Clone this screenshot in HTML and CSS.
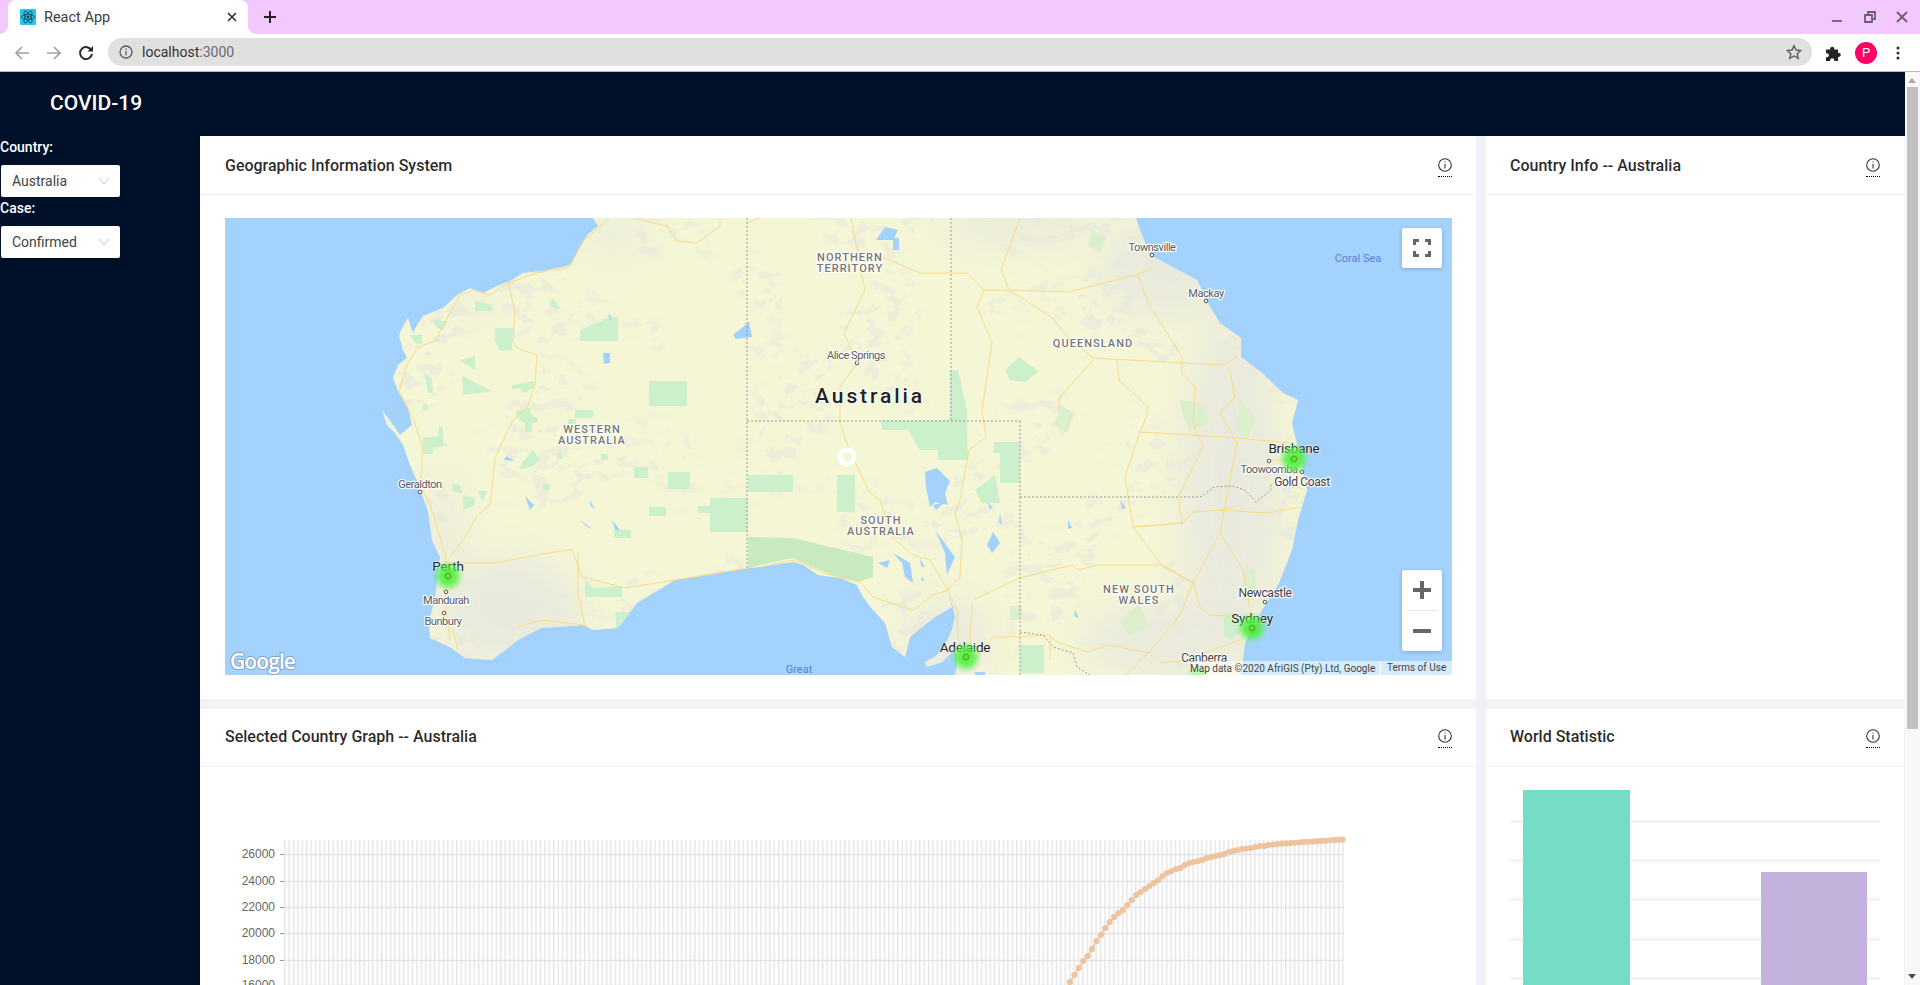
FILE: index.html
```html
<!DOCTYPE html>
<html lang="en">
<head>
<meta charset="utf-8">
<title>React App</title>
<link rel="stylesheet" href="styles.css">
</head>
<body>
<div class="window">
  <div class="tabstrip">
    <div class="tab">
      <svg class="favicon" viewBox="0 0 16 16" width="16" height="16"><rect width="16" height="16" rx="1" class="fav-bg"/><g class="fav-atom"><ellipse cx="8" cy="8" rx="6.6" ry="2.6"/><ellipse cx="8" cy="8" rx="6.6" ry="2.6" transform="rotate(60 8 8)"/><ellipse cx="8" cy="8" rx="6.6" ry="2.6" transform="rotate(120 8 8)"/></g><circle cx="8" cy="8" r="1.3" class="fav-dot"/></svg>
      <span class="tab-title">React App</span>
      <svg class="tab-close" viewBox="0 0 10 10" width="10" height="10"><path d="M1 1l8 8M9 1l-8 8"/></svg>
    </div>
    <svg class="new-tab" viewBox="0 0 12 12" width="12" height="12"><path d="M6 0v12M0 6h12"/></svg>
    <div class="win-controls">
      <svg viewBox="0 0 12 12" width="12" height="12"><path d="M1 10h10"/></svg>
      <svg viewBox="0 0 12 12" width="12" height="12"><path d="M4 3V1h7v7H9M1 4h7v7H1z"/></svg>
      <svg viewBox="0 0 12 12" width="12" height="12"><path d="M1 1l10 10M11 1L1 11"/></svg>
    </div>
  </div>
  <div class="toolbar">
    <svg class="nav nav-off" viewBox="0 0 16 16" width="16" height="16"><path d="M15 8H2M8 2L2 8l6 6"/></svg>
    <svg class="nav nav-off" viewBox="0 0 16 16" width="16" height="16"><path d="M1 8h13M8 2l6 6-6 6"/></svg>
    <svg class="nav nav-on" viewBox="0 0 16 16" width="16" height="16"><path d="M13.5 5.5A6 6 0 1 0 14 9"/><path class="fill" d="M9.5 6.5H15V1z"/></svg>
    <div class="omnibox">
      <svg class="omni-info" viewBox="0 0 14 14" width="14" height="14"><circle cx="7" cy="7" r="6"/><path d="M7 6v4.2M7 3.5v1.2"/></svg>
      <span class="url">localhost<span class="url-port">:3000</span></span>
      <svg class="star" viewBox="0 0 16 16" width="16" height="16"><path d="M8 1.6l2 4.4 4.7.5-3.5 3.2 1 4.7L8 12l-4.200 2.400 1-4.700L1.300 6.500 6 6z"/></svg>
    </div>
    <svg class="puzzle" viewBox="0 0 16 16" width="16" height="16"><path d="M0 4.500h4.300a2.100 2.100 0 1 1 4 -.2v.2H12v3.400a2.100 2.100 0 1 1 .1 4H12V16H8.200a2.100 2.100 0 1 0-4 0H0v-3.800a2.100 2.100 0 1 0 0-3.900z"/></svg>
    <span class="avatar">P</span>
    <svg class="menu-dots" viewBox="0 0 4 14" width="4" height="14"><circle cx="2" cy="2" r="1.500"/><circle cx="2" cy="7" r="1.500"/><circle cx="2" cy="12" r="1.500"/></svg>
  </div>

  <div class="viewport">
    <div class="page">
      <header class="app-header">COVID-19</header>
      <div class="app-body">
        <aside class="sidebar">
          <label class="field-label">Country:</label>
          <div class="select"><span>Australia</span><svg viewBox="0 0 12 8" width="12" height="8"><path d="M1 1l5 6 5-6"/></svg></div>
          <label class="field-label field-label-2">Case:</label>
          <div class="select"><span>Confirmed</span><svg viewBox="0 0 12 8" width="12" height="8"><path d="M1 1l5 6 5-6"/></svg></div>
        </aside>
        <main class="dashboard">
          <section class="card">
            <div class="card-head"><h2>Geographic Information System</h2><span class="info"><svg viewBox="0 0 14 14" width="14" height="14"><circle cx="7" cy="7" r="6.300"/><path d="M7 6v4.500M7 3.400v1.200"/></svg></span></div>
            <div class="card-body map-body">
              <div class="map">
                <svg class="map-svg" viewBox="225 218 1227 457" width="1227" height="457">
                  <defs>
                    <clipPath id="landClip"><path d="M593 218L598 226 587 235 580 248 570 265 543 271 523 273 510 281 497 286 483 293 470 288 457 295 443 308 423 316 417 325 413 333 408 318 402 328 399 336 403 350 407 358 398 365 393 378 398 391 408 408 412 425 400 435 393 425 382 410 387 425 395 433 403 445 410 465 417 481 422 495 428 511 429 518 432 540 440 557 438 577 434 603 429 620 430 638 450 647 465 658 492 660 518 640 541 628 584 625 593 630 618 628 637 603 675 580 748 568 760 567 793 562 803 565 818 575 840 578 857 585 863 597 873 610 885 623 892 647 905 657 910 637 927 623 935 617 952 607 948 592 953 607 955 617 952 630 945 645 935 657 925 662 927 667 942 662 952 652 956 650 958 660 955 675 1241 675 1245 643 1262 610 1279 583 1292 550 1298 520 1307 490 1296 440 1292 423 1298 400 1283 393 1262 373 1241 357 1241 338 1220 323 1210 307 1197 280 1178 270 1150 255 1140 230 1136 218z"/></clipPath>
                    <filter id="mottle" x="0" y="0" width="100%" height="100%" color-interpolation-filters="sRGB">
                      <feTurbulence type="fractalNoise" baseFrequency=".06 .085" numOctaves="3" seed="11" result="fine"/>
                      <feColorMatrix in="fine" type="matrix" values="0 0 0 0 .925  0 0 0 0 .92  0 0 0 0 .86  14 0 0 0 -7.700" result="blobs"/>
                      <feTurbulence type="fractalNoise" baseFrequency=".012" numOctaves="2" seed="4" result="broad"/>
                      <feColorMatrix in="broad" type="matrix" values="0 0 0 0 1  0 0 0 0 1  0 0 0 0 1  0 9 0 0 -4.300" result="mask"/>
                      <feComposite in="blobs" in2="mask" operator="in"/>
                    </filter>
                    <filter id="soft"><feGaussianBlur stdDeviation="18"/></filter>
                    <filter id="tiny"><feGaussianBlur stdDeviation=".3"/></filter>
                    <radialGradient id="heat"><stop offset="0" class="heat-a"/><stop offset=".5" class="heat-b"/><stop offset="1" class="heat-c"/></radialGradient>
                  </defs>
                  <rect x="225" y="218" width="1227" height="457" class="sea"/>
                  <g filter="url(#tiny)">
                    <g clip-path="url(#landClip)">
                      <rect x="225" y="218" width="1227" height="457" class="land"/>
                      <rect x="225" y="218" width="1227" height="457" filter="url(#mottle)" class="mottle"/>
                      <g filter="url(#soft)" class="grey">
                        <ellipse cx="510" cy="610" rx="70" ry="55"/>
                        <ellipse cx="445" cy="540" rx="14" ry="70"/>
                        <ellipse cx="475" cy="300" rx="25" ry="10"/>
                        <ellipse cx="610" cy="235" rx="40" ry="14"/>
                        <ellipse cx="1230" cy="490" rx="50" ry="170"/>
                        <ellipse cx="1170" cy="270" rx="70" ry="50"/>
                        <ellipse cx="1020" cy="225" rx="80" ry="18"/>
                        <ellipse cx="1170" cy="640" rx="90" ry="35"/>
                        <ellipse cx="950" cy="640" rx="40" ry="40"/>
                      </g>
                      <g class="park">
                        <path d="M580 330L610 317H618V341H580z"/>
                        <path d="M649 381h38v25h-38zM668 472h22v17h-22zM748 475h45v17h-45zM710 498h38v34h-38zM698 506h12v7h-12zM649 507h17v9h-17zM614 530h17v8h-17zM634 467h14v11h-14zM575 410h18v8h-18zM568 419h8v5h-8z"/>
                        <path d="M515 411L530 408 532 416 538 418 538 422 532 423 532 432 525 432 525 423 520 421z"/>
                        <path d="M512 385L535 381 533 388 523 393 522 388 512 389zM462 376L492 391 480 393 463 395zM424 373L432 378 433 393 428 393zM459 360L475 356 475 370zM495 328H513L512 350 500 351 495 341zM475 301L492 305V311H475zM553 298L561 310 548 305zM433 320L448 321 443 330 437 328zM410 335H422V344L415 343z"/>
                        <path d="M423 438L438 436 439 426 443 428 443 443 448 445 433 448 433 454 423 454zM533 450L540 460 533 466 520 470 522 463zM460 485L462 493 452 491 453 483zM463 495L475 498V505L463 510zM478 491H488L482 501zM543 484h6v6h-6zM601 454h7v6h-7zM557 453h5v6h-5zM423 405h5v5h-5z"/>
                        <path d="M585 580l8 8 29-2v11h-37zM616 612h14l5-6-3 14-16 10z"/>
                        <path class="park-dark" d="M748 537L793 538 873 557V577L857 582 837 577 803 563 793 558 760 565 748 568z"/>
                        <path d="M950 370h8l9 40v10l1 40h-30v-10h-18l-12-20h-26l-1-10h69z"/>
                        <path d="M837 475h18v37h-18zM994 442h26v41h-20v-30h-6zM975 490l20-15 5 28h-18zM1020 645h24v28h-24z"/>
                        <path d="M1005 370l14-13 19 14-12 11-16-2zM1224 613l21 1v14l-14 12-7-5z"/>
                        <path class="park-faint" d="M1245 570h10v30h-12zM1180 400l24 4 5 20-20 6-7-18zM1092 230l14 8-6 14-12-6zM1060 405l15 8-8 20-12-8zM1240 400l16 16-8 24-12-12zM1120 620l20-16 8 22-20 10zM1010 606h12v14h-12z"/>
                      </g>
                      <g class="lake">
                        <path d="M925 472l12-4 13 13-5 12 3 12-13-3-5 5-4-20z"/>
                        <path d="M935 530L955 557 947 575 945 553z"/>
                        <path d="M893 553L910 563 913 583 905 577 902 563zM993 532L1000 543 992 553 987 545zM878 563L890 560 887 568zM920 558L925 568 921 566zM922 577L925 580 921 581zM933 505L945 502 936 510zM987 502L993 508 990 509zM1000 513L1002 525 999 522zM876 240l9-13 13 3-5 10zM893 238h6v12h-6zM733 335l16-13 3 15-16 2zM603 353h7v10l-6 1zM610 321l-2-7 3 2zM515 461L504 460 506 456zM530 510L525 496 534 505zM580 520L594 530 586 526zM612 520L620 530 615 530zM590 500L595 510 590 505zM975 672h10v3h-10zM1120 500l6 8-4 1zM1068 520l4 8-4 1zM1075 610l4 8-5-2z"/>
                      </g>
                    </g>
                    <g class="road">
                      <path d="M508 283L515 311 513 341 517 348 537 355 535 385 527 408 513 420 495 458 493 478 490 505 477 516 465 537 450 557"/>
                      <path d="M450 563L495 563 526 557 572 549 582 577 626 588 675 580 748 568"/>
                      <path d="M578 552L578 593 585 627M453 630L458 650M518 627L541 620 584 625"/>
                      <path d="M508 283L490 295 473 290 460 295 440 331 437 340 417 348 407 365 399 391 413 418 422 445 422 471 420 485 430 505 434 517 446 557 446 610 450 640"/>
                      <path d="M508 283L537 273 570 266 583 241 600 226 610 218"/>
                      <path d="M633 218L667 226 677 241 697 243 720 226V218M747 223L760 218"/>
                      <path d="M851 218L865 290 844 333 857 363 840 387 840 423 849 450 870 493 880 500 892 537 913 555 930 560 948 590"/>
                      <path d="M760 567L793 560 817 570 823 573 860 582 873 597 890 603 913 610 933 595 948 590"/>
                      <path d="M882 257L920 273 967 273 984 290 977 307 992 343 982 410 986 437 969 450 960 500 955 513 962 540 960 577 948 590 957 610 958 640"/>
                      <path d="M984 290L1009 290 1068 292 1136 275 1153 268M1020 218L1001 270 1009 290"/>
                      <path d="M1009 290L1051 317 1068 337 1093 358 1165 362 1224 365 1237 357"/>
                      <path d="M1138 275L1148 303 1182 357 1182 373 1195 387 1193 423 1203 447 1178 497 1182 523 1133 527"/>
                      <path d="M1093 360L1060 397 1058 410M1117 360L1119 380 1148 407 1146 418 1140 432 1125 477 1133 527 1160 563 1193 583 1200 607 1210 615 1240 617"/>
                      <path d="M1140 432L1224 437 1292 443M1229 367L1235 397 1220 413 1237 443 1224 510 1220 533 1243 570 1250 610"/>
                      <path d="M972 603L970 643M973 600L1020 578 1060 568 1073 565 1078 570 1097 565 1160 565 1193 583"/>
                      <path d="M1220 533L1193 583 1180 615 1160 640 1148 653 1127 675M1148 653L1110 645 1087 652 1060 643 1047 635 1007 637 993 637 973 662M1050 635V660M1160 663L1187 660 1203 653 1240 640"/>
                      <path d="M1133 527L1183 523 1193 512 1220 510 1240 505M1275 477L1305 490M1220 510L1267 513 1300 507M1270 460H1294"/>
                    </g>
                    <g class="border">
                      <path d="M747 218V568M747 421H1020M951 218V421M1020 421V675M1020 497H1201L1214 487 1233 486 1245 490 1256 502 1271 490 1271 483M1020 632L1043 635 1053 647 1073 653 1077 667 1090 675"/>
                    </g>
                  </g>
                  <g class="city-dot">
                    <circle cx="420" cy="492" r="1.800"/><circle cx="446" cy="592" r="1.800"/><circle cx="444" cy="613" r="1.800"/>
                    <circle cx="1152" cy="255" r="1.800"/><circle cx="1206" cy="301" r="1.800"/><circle cx="857" cy="363" r="1.800"/>
                    <circle cx="1269" cy="461" r="1.800"/><circle cx="1302" cy="472" r="1.800"/><circle cx="1265" cy="602" r="1.800"/>
                  </g>
                  <circle cx="847" cy="457" r="7" class="ring"/>
                  <g class="lbl-state">
                    <text x="592" y="433">WESTERN</text><text x="592" y="444">AUSTRALIA</text>
                    <text x="850" y="261">NORTHERN</text><text x="850" y="272">TERRITORY</text>
                    <text x="1093" y="347">QUEENSLAND</text>
                    <text x="881" y="524">SOUTH</text><text x="881" y="535">AUSTRALIA</text>
                    <text x="1139" y="593">NEW SOUTH</text><text x="1139" y="604">WALES</text>
                  </g>
                  <g class="lbl-town">
                    <text x="420" y="488">Geraldton</text><text x="446" y="604">Mandurah</text><text x="443" y="625">Bunbury</text>
                    <text x="1152" y="251">Townsville</text><text x="1206" y="297">Mackay</text><text x="856" y="359">Alice Springs</text>
                    <text x="1269" y="473">Toowoomba</text>
                  </g>
                  <g class="lbl-mid">
                    <text x="1302" y="486">Gold Coast</text><text x="1265" y="597">Newcastle</text><text x="1204" y="662">Canberra</text>
                  </g>
                  <g class="lbl-city">
                    <text x="448" y="571">Perth</text><text x="1294" y="453">Brisbane</text><text x="1252" y="623">Sydney</text><text x="965" y="652">Adelaide</text>
                  </g>
                  <text x="870" y="403" class="lbl-country">Australia</text>
                  <text x="1358" y="262" class="lbl-sea">Coral Sea</text>
                  <text x="799" y="673" class="lbl-sea">Great</text>
                  <text x="230" y="669" class="logo">Google</text>
                  <g class="heatspots">
                    <circle cx="448" cy="576" r="16"/>
                    <circle cx="1294" cy="459" r="16"/>
                    <circle cx="1252" cy="628" r="16"/>
                    <circle cx="966" cy="657" r="16"/>
                    <circle cx="1198" cy="676" r="11"/>
                  </g>
                  <g class="city-ring">
                    <circle cx="448" cy="576" r="2.800"/><circle cx="1294" cy="459" r="2.800"/><circle cx="1252" cy="628" r="2.800"/><circle cx="966" cy="657" r="2.800"/>
                  </g>
                </svg>
                <button class="map-btn fullscreen"><svg viewBox="0 0 18 18" width="18" height="18"><path d="M1.500 6V1.500H6M12 1.500h4.500V6M16.500 12v4.500H12M6 16.500H1.500V12"/></svg></button>
                <div class="map-btn zoom-ctl">
                  <span class="zoom-btn"><svg viewBox="0 0 18 18" width="18" height="18"><path d="M0 9h18M9 0v18"/></svg></span>
                  <span class="zoom-sep"></span>
                  <span class="zoom-btn"><svg viewBox="0 0 18 18" width="18" height="18"><path d="M0 9h18"/></svg></span>
                </div>
                <div class="attrib"><span>Map data ©2020 AfriGIS (Pty) Ltd, Google</span><span class="attrib-terms">Terms of Use</span></div>
              </div>
            </div>
          </section>

          <section class="card">
            <div class="card-head card-head-side"><h2>Country Info -- Australia</h2><span class="info"><svg viewBox="0 0 14 14" width="14" height="14"><circle cx="7" cy="7" r="6.300"/><path d="M7 6v4.500M7 3.400v1.200"/></svg></span></div>
          </section>

          <section class="card">
            <div class="card-head card-head-low"><h2>Selected Country Graph -- Australia</h2><span class="info"><svg viewBox="0 0 14 14" width="14" height="14"><circle cx="7" cy="7" r="6.300"/><path d="M7 6v4.500M7 3.400v1.200"/></svg></span></div>
            <svg class="chart" viewBox="200 767 1276 218" width="1276" height="218">
              <defs>
                <pattern id="vgrid" x="284" y="0" width="4.410" height="10" patternUnits="userSpaceOnUse"><path d="M.7 0v10" class="grid-v"/></pattern>
                <marker id="dot" markerUnits="userSpaceOnUse" markerWidth="8" markerHeight="8" refX="4" refY="4"><circle cx="4" cy="4" r="3.100" class="dot-fill"/></marker>
              </defs>
              <rect x="284" y="840" width="1060" height="145" fill="url(#vgrid)"/>
              <g class="grid-h">
                <path d="M284 854.500H1343M284 881.500H1343M284 907.500H1343M284 933.500H1343M284 960.500H1343M284 985.500H1343"/>
              </g>
              <g class="tick">
                <path d="M280 854.500h4M280 881.500h4M280 907.500h4M280 933.500h4M280 960.500h4"/>
              </g>
              <g class="axis-label">
                <text x="275" y="858">26000</text><text x="275" y="885">24000</text><text x="275" y="911">22000</text><text x="275" y="937">20000</text><text x="275" y="964">18000</text><text x="275" y="989">16000</text>
              </g>
              <polyline class="curve" marker-start="url(#dot)" marker-mid="url(#dot)" marker-end="url(#dot)" points="1066,989 1070,982 1074.400,975 1078.800,968 1083.200,961 1087.600,956 1092,949 1096.500,941 1100.900,935 1105.300,928 1109.700,922 1114.100,917 1118.500,913 1122.900,910 1127.300,905 1131.700,900 1136.200,895 1140.600,892 1145,889 1149.400,886 1153.800,883 1158.200,880 1162.600,876 1167,873 1171.400,871 1175.900,869 1180.300,868 1184.700,865 1189.100,863 1193.500,862 1197.900,861 1202.300,860 1206.700,858 1211.100,857 1215.600,856 1220,855 1224.400,854 1228.800,852 1233.200,851 1237.600,850 1242,849 1246.400,848.500 1250.800,848 1255.300,847 1259.700,846 1264.100,846 1268.500,845 1272.900,844.500 1277.300,844 1281.700,843.700 1286.100,843.400 1290.500,843.100 1295,842.800 1299.400,842.400 1303.800,842 1308.200,841.800 1312.600,841.500 1317,841.200 1321.400,840.900 1325.900,840.600 1330.300,840.300 1334.700,840 1339.100,839.700 1342.500,839.500"/>
            </svg>
          </section>

          <section class="card">
            <div class="card-head card-head-side card-head-low"><h2>World Statistic</h2><span class="info"><svg viewBox="0 0 14 14" width="14" height="14"><circle cx="7" cy="7" r="6.300"/><path d="M7 6v4.500M7 3.400v1.200"/></svg></span></div>
            <svg class="chart" viewBox="1486 767 418 218" width="418" height="218">
              <path class="stat-grid" d="M1510 821.500H1880M1510 860.500H1880M1510 899.500H1880M1510 939.500H1880M1510 978.500H1880"/>
              <rect x="1523" y="790" width="107" height="195" class="bar-green"/>
              <rect x="1761" y="872" width="106" height="113" class="bar-purple"/>
            </svg>
          </section>
        </main>
      </div>
    </div>
    <div class="scrollbar">
      <span class="sb-up"></span>
      <span class="sb-thumb"></span>
      <span class="sb-down"></span>
    </div>
  </div>
</div>
</body>
</html>
```
FILE: styles.css
```css
* { box-sizing: border-box; }
html, body { margin: 0; padding: 0; height: 100%; overflow: hidden; background: #fff; }
body { font-family: Roboto, "Liberation Sans", sans-serif; }

.window { width: 1920px; height: 985px; display: flex; flex-direction: column; overflow: hidden; }

/* Browser chrome */
.tabstrip { height: 34px; background: #f2c8ff; display: flex; align-items: center; flex: none; }
.tab { position: relative; width: 240px; height: 34px; margin-left: 8px; background: #fff; border-radius: 8px 8px 0 0; display: flex; align-items: center; padding-left: 12px; }
.tab::before, .tab::after { content: ""; position: absolute; bottom: 0; width: 8px; height: 8px; }
.tab::before { left: -8px; background: radial-gradient(circle at 0 0, transparent 7.5px, #fff 8px); }
.tab::after { right: -8px; background: radial-gradient(circle at 100% 0, transparent 7.5px, #fff 8px); }
.favicon { flex: none; }
.fav-bg { fill: #26c6ee; }
.fav-atom ellipse { fill: none; stroke: #16323f; stroke-width: .7; }
.fav-dot { fill: #16323f; }
.tab-title { margin-left: 8px; font-size: 14.500px; color: #3c3c40; }
.tab-close { position: absolute; left: 219px; top: 12px; }
.tab-close path { stroke: #333; stroke-width: 1.700; fill: none; }
.new-tab { margin-left: 16px; }
.new-tab path { stroke: #222; stroke-width: 2; fill: none; }
.win-controls { margin-left: auto; display: flex; gap: 20.500px; padding-right: 12px; align-items: center; }
.win-controls path { stroke: #6a5f70; stroke-width: 1.800; fill: none; }

.toolbar { position: relative; height: 38px; background: #fff; border-bottom: 1px solid #b9b9b9; display: flex; align-items: center; padding-left: 14px; flex: none; }
.nav { margin-right: 16px; flex: none; }
.nav-on { margin-right: 14px; }
.nav path { fill: none; stroke-width: 1.700; }
.nav-off path { stroke: #a2a2a2; }
.nav-on path { stroke: #2a2a2a; stroke-width: 2; }
.nav-on .fill { fill: #2a2a2a; stroke: none; }
.omnibox { width: 1704px; margin-top: -1px; height: 28px; border-radius: 14px; background: #e0e0e0; display: flex; align-items: center; padding-left: 11px; flex: none; }
.omni-info { flex: none; }
.omni-info circle, .omni-info path { fill: none; stroke: #5a5a5a; stroke-width: 1.300; }
.url { margin-left: 9px; font-size: 14px; color: #333; }
.url-port { color: #6a6a6a; }
.star { margin-left: auto; margin-right: 10px; }
.star path { fill: none; stroke: #5f5f5f; stroke-width: 1.400; }
.puzzle { margin-left: 14px; flex: none; }
.puzzle path { fill: #222; }
.avatar { margin-left: 13px; width: 22px; height: 22px; border-radius: 50%; background: #ff0066; color: #fff; font-size: 13px; display: flex; align-items: center; justify-content: center; flex: none; }
.menu-dots { margin-left: 19px; flex: none; }
.menu-dots circle { fill: #2a2a2a; }

/* Page */
.viewport { flex: 1; display: flex; min-height: 0; }
.page { flex: 1; min-width: 0; overflow: hidden; background: #f0f2f5; }
.app-header { height: 64px; background: #001029; color: #fff; font-size: 21px; font-weight: 500; line-height: 62px; padding-left: 50px; }
.app-body { display: flex; }
.sidebar { width: 200px; height: 849px; background: #001029; flex: none; }
.field-label { display: block; color: #fff; font-size: 14px; font-weight: 500; height: 29px; line-height: 22px; }
.select { margin-left: 1px; width: 119px; height: 32px; background: #fff; border-radius: 2px; display: flex; align-items: center; justify-content: space-between; padding: 0 10px 0 11px; font-size: 14px; color: #444; }
.select svg path { fill: none; stroke: #c4c4c4; stroke-width: 1; }
.dashboard { display: grid; grid-template-columns: 1276px 418px; grid-template-rows: 563px 276px; gap: 10px; }
.card { background: #fff; overflow: hidden; }
.card-head { height: 59px; border-bottom: 1px solid #f0f0f0; display: flex; align-items: flex-start; justify-content: space-between; padding: 0 24px 0 25px; }
.card-head-side { padding-left: 24px; }
.card-head h2 { margin: 0; font-size: 16px; font-weight: 500; color: rgba(0,0,0,.85); line-height: 59px; }
.info { margin-top: 22px; width: 14px; height: 19px; border-bottom: 1px dotted #000; display: block; line-height: 0; }
.info circle, .info path { fill: none; stroke: #333; stroke-width: 1.100; }
.card-head-low { height: 58px; }
.card-head-low h2 { line-height: 56px; }
.card-head-low .info { margin-top: 20px; }
.map-body { padding: 23px 24px 24px 25px; }
.map { position: relative; width: 1227px; height: 457px; overflow: hidden; }
.map-svg { display: block; }

.sea { fill: #a3d2fd; }
.land { fill: #f5f6d6; }
.mottle { opacity: .85; }
.grey { fill: #e8e8de; opacity: .9; }
.park { fill: #cdf0cc; }
.park .park-dark { fill: #c9e9c0; }
.park .park-faint { fill: #dcefcd; }
.lake { fill: #a3d2fd; }
.road { fill: none; stroke: #f8dc88; stroke-width: 1; }
.border { fill: none; stroke: #9a9a9a; stroke-width: 1; stroke-dasharray: 2 2; }
.heat-a { stop-color: #3cf02c; stop-opacity: .95; }
.heat-b { stop-color: #4cf23c; stop-opacity: .8; }
.heat-c { stop-color: #66f060; stop-opacity: 0; }
.heatspots circle { fill: url(#heat); }
.city-dot circle { fill: #fff; stroke: #555; stroke-width: 1; }
.city-ring circle { fill: none; stroke: #7d8a20; stroke-width: 1; }
.ring { fill: none; stroke: #fff; stroke-width: 5; }
.map text { text-anchor: middle; paint-order: stroke; stroke: rgba(255,255,255,.85); stroke-width: 2.500px; stroke-linejoin: round; font-family: Roboto, sans-serif; }
.lbl-state text { font-size: 11px; font-weight: 500; fill: #777; letter-spacing: 1.050px; }
.lbl-town text { font-size: 11px; fill: #5c5c5c; letter-spacing: -.45px; }
.lbl-mid text { font-size: 12px; fill: #444; letter-spacing: -.35px; }
.lbl-city text { font-size: 13.500px; fill: #222; letter-spacing: -.2px; stroke-width: 1.500px; stroke: rgba(255,255,255,.6); }
.map text.lbl-country { font-size: 21px; font-weight: 500; fill: #222; letter-spacing: 2.900px; }
.map text.lbl-sea { font-size: 11px; fill: #5b7fd6; stroke: none; }
.map text.logo { text-anchor: start; font-family: "Open Sans", sans-serif; font-size: 21px; font-weight: 600; fill: #fff; stroke: rgba(90,110,130,.45); stroke-width: 2px; letter-spacing: -.9px; }

.map-btn { position: absolute; left: 1177px; width: 40px; background: #fff; border: 0; padding: 0; border-radius: 2px; box-shadow: 0 1px 4px rgba(0,0,0,.2); }
.fullscreen { top: 10px; height: 40px; display: flex; align-items: center; justify-content: center; }
.fullscreen path { fill: none; stroke: #666; stroke-width: 3; }
.zoom-ctl { top: 352px; height: 81px; display: flex; flex-direction: column; }
.zoom-btn { height: 40px; display: flex; align-items: center; justify-content: center; }
.zoom-btn path { fill: none; stroke: #666; stroke-width: 4; }
.zoom-sep { height: 1px; margin: 0 5px; background: #e6e6e6; flex: none; }
.attrib { position: absolute; right: 0; bottom: 0; height: 14px; width: 262px; display: flex; align-items: center; background: rgba(255,255,255,.55); font-size: 10px; color: #444; white-space: nowrap; }
.attrib-terms { position: absolute; left: 190px; padding-left: 6px; border-left: 1px solid #fff; line-height: 14px; }

/* Charts */
.chart { display: block; }
.grid-v { stroke: #e4e4e4; stroke-width: 1.300; fill: none; }
.grid-h path { stroke: #e4e4e4; stroke-width: 1.500; fill: none; }
.tick path { stroke: #999; stroke-width: 1; fill: none; }
.axis-label text { font-family: "Liberation Sans", Arial, sans-serif; font-size: 12px; fill: #666; text-anchor: end; }
.curve { fill: none; stroke: #edc49d; stroke-width: 1.500; }
.dot-fill { fill: #edc49d; }
.stat-grid { stroke: #ececec; stroke-width: 1.500; fill: none; }
.bar-green { fill: #76dcc6; }
.bar-purple { fill: #c3b2dc; }

/* Fake scrollbar */
.scrollbar { position: relative; width: 15px; flex: none; background: #f8f8f8; }
.sb-thumb { position: absolute; left: 2px; top: 15px; width: 11px; height: 642px; background: #c1c1c1; }
.sb-up, .sb-down { position: absolute; left: 3px; width: 0; height: 0; border-left: 4px solid transparent; border-right: 4px solid transparent; }
.sb-up { top: 6px; border-bottom: 5px solid #a8a8a8; }
.sb-down { bottom: 6px; border-top: 5px solid #505050; }
```
